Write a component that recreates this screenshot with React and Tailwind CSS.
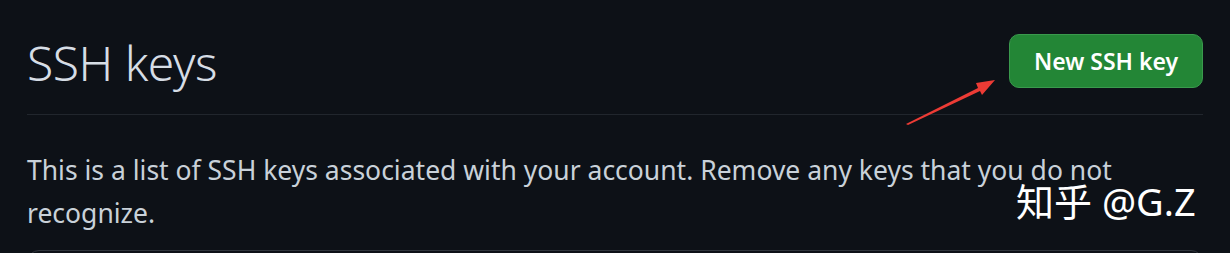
import React from "react";

export default function App() {
  return (
    <div
      className="relative w-[1230px] h-[253px] overflow-hidden bg-[#0d1117] pt-[34px] px-[27px]"
      style={{ fontFamily: '"Noto Sans", "Open Sans", sans-serif' }}
    >
      <div className="flex items-center justify-between pb-[26px] border-b border-[#21262d]">
        <h2 className="text-[48px] font-light leading-none text-[#d6dde5] tracking-[-0.5px] mt-[4px]">SSH keys</h2>
        <button className="h-[54px] w-[194px] rounded-[10px] bg-[#238636] border border-[#3a9a4d] text-white text-[23px] font-semibold">
          New SSH key
        </button>
      </div>
      <p className="mt-[34px] text-[26.5px] leading-[43px] text-[#c9d1d9] pr-[50px]">
        This is a list of SSH keys associated with your account. Remove any keys that you do not recognize.
      </p>
      <div className="mt-[15px] h-[40px] border border-[#30363d] rounded-t-[12px] bg-[#0d1117]"></div>

      <div
        className="absolute left-[1016px] top-[182px] text-[38px] leading-[38px] text-white"
        style={{ fontFamily: '"Noto Sans", "Noto Sans CJK SC", sans-serif' }}
      >
        知乎 @G.Z
      </div>

      <svg className="absolute left-0 top-0" width="1230" height="253" viewBox="0 0 1230 253">
        <polygon
          points="906,124 978,88 976,83 995,80 982,95 980,91 908,125"
          fill="#ec3b35"
        />
      </svg>
    </div>
  );
}
